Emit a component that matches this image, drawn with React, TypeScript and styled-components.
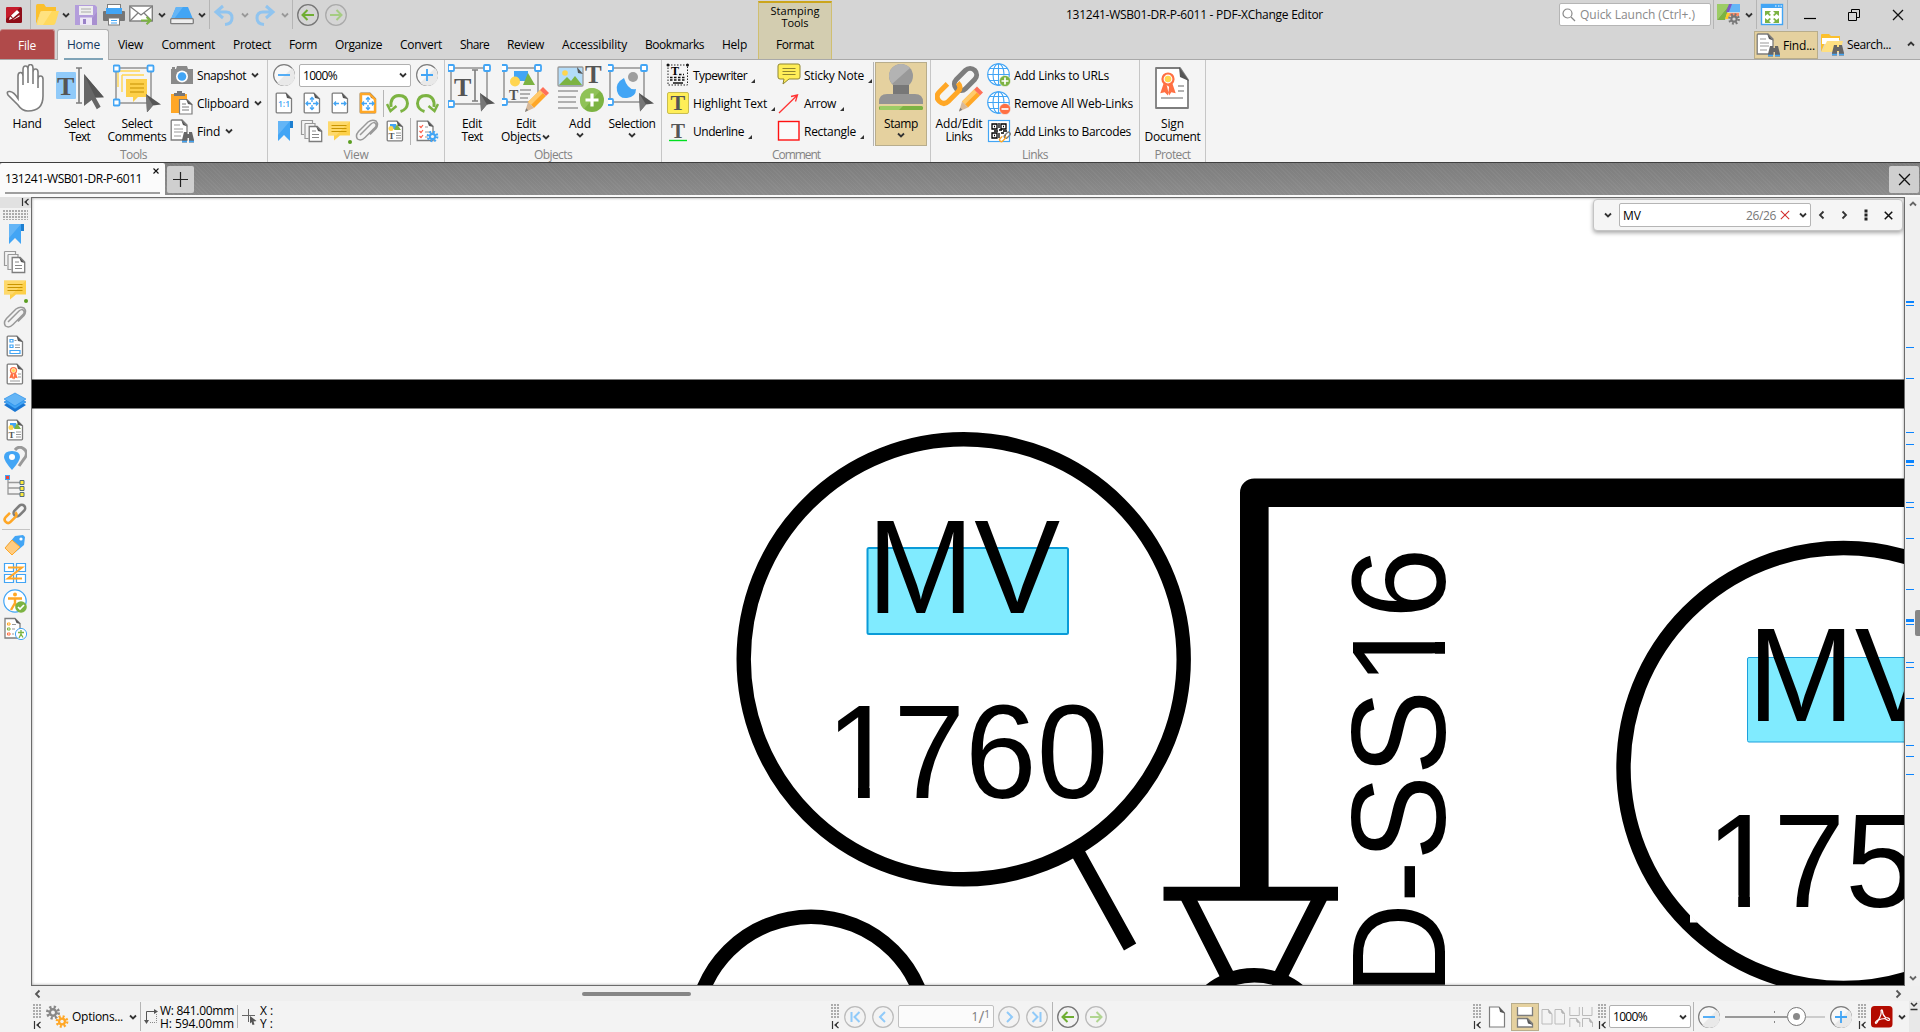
import React, { useLayoutEffect, useRef, useState } from "react";
import styled, { createGlobalStyle, css } from "styled-components";

const ink = "#555";
const line = "#7d7d7d";
const blue = "#42a5f5";
const orange = "#ffa726";
const green = "#7cb342";

const GlobalStyle = createGlobalStyle`
  * { box-sizing: border-box; }
  html, body { margin: 0; padding: 0; }
  body {
    font-family: "Open Sans", "Noto Sans", sans-serif;
    font-size: 12px;
    color: #000;
    overflow: hidden;
  }
  svg { display: block; flex: none; }
`;

/* ---------- text ---------- */

const LabelText = styled.span<{ $color?: string; $size?: number }>`
  display: block;
  white-space: pre;
  line-height: 13px;
  font-size: ${(p) => p.$size ?? 12}px;
  color: ${(p) => p.$color ?? "inherit"};
`;

/* A label whose tracking is adjusted so that it fills the given width. */
function Label({ w, color, size, children }: { w: number; color?: string; size?: number; children: string }) {
  const ref = useRef<HTMLSpanElement>(null);
  const [tracking, setTracking] = useState(0);
  useLayoutEffect(() => {
    const range = document.createRange();
    range.selectNodeContents(ref.current!);
    setTracking((w - range.getBoundingClientRect().width) / children.length);
  }, []);
  return (
    <LabelText ref={ref} $color={color} $size={size} style={{ letterSpacing: tracking, width: w }}>
      {children}
    </LabelText>
  );
}

/* ---------- icons ---------- */

type IconProps = { s?: number; children?: React.ReactNode };
const Svg = ({ s = 24, children }: IconProps) => (
  <svg width={s} height={s} viewBox={`0 0 ${s} ${s}`} fill="none">{children}</svg>
);

const Chevron = ({ dir = "down", color = "#333" }: { dir?: "down" | "up" | "left" | "right"; color?: string }) => {
  const d = { down: "M2 3.500l3 3 3-3", up: "M2 6.500l3-3 3 3", left: "M6.5 1.5L3 5l3.500 3.500", right: "M3.500 1.500L7 5l-3.500 3.500" }[dir];
  return <svg width="10" height="10" viewBox="0 0 10 10" fill="none"><path d={d} stroke={color} strokeWidth="1.800" /></svg>;
};

const Cross = ({ s = 12, color = "#111", w = 1.3 }: { s?: number; color?: string; w?: number }) => (
  <svg width={s} height={s} viewBox="0 0 12 12" fill="none"><path d="M1 1l10 10M11 1L1 11" stroke={color} strokeWidth={w} /></svg>
);

const DocShape = () => (
  <>
    <path d="M4.200 3q0-.8.8-.8h9l5.500 5.500V21q0 .8-.8.800H5q-.8 0-.8-.8z" fill="#fff" stroke={line} strokeWidth="1.300" />
    <path d="M13.500 1.800l6 6.200-4.500-1z" fill={ink} />
  </>
);
const LogoIcon = () => (
  <svg width="16" height="16" viewBox="0 0 16 16">
    <rect width="16" height="16" rx="1.500" fill="#8f0d18" /><path d="M0 1.500Q0 0 1.500 0H15L0 12z" fill="#c51c2c" />
    <path d="M5 8.500l6-5.500 2.500 2.500-6.500 5.500zM4 9.500l2.500 2-3.500 1.500zM8 12l5.500-4v1.500L7 13z" fill="#fff" />
  </svg>
);
const FolderOpen = () => (
  <Svg><path d="M1 3q0-2 1.500-2H9l2 3h10v4H6L1 21z" fill="#fbc02d" /><path d="M7 8h17l-3.500 12Q20 22 18 22H1.500L5 9.500Q5.500 8 7 8z" fill="#ffd95e" /><path d="M8 8h9L8 22H2L5.500 9z" fill="#ffe58f" opacity=".7" /></Svg>
);
const SaveIcon = () => (
  <Svg><path d="M1 2h20l2 2v18H1z" fill="#b39ddb" /><path d="M13 22L23 9v13z" fill="#a88fd0" /><rect x="5" y="3" width="14" height="9" fill="#eee" /><path d="M7 6h10M7 9h10" stroke="#aaa" /><rect x="6" y="14.500" width="12" height="7.500" fill="#ede7f6" /><rect x="9" y="16" width="3" height="5" fill="#9a82c8" /></Svg>
);
const PrintIcon = () => (
  <Svg><rect x="5.500" y="1.500" width="13" height="6" fill="#fff" stroke={line} /><rect x="1" y="8" width="22" height="10" rx="1" fill="#757575" /><rect x="4" y="5" width="16" height="6" fill={blue} /><rect x="6.500" y="15" width="11" height="7" fill="#fff" stroke={line} /><path d="M9 17.500h6M9 20h6" stroke={blue} /></Svg>
);
const MailIcon = () => (
  <Svg><rect x=".8" y="3" width="22.500" height="15" fill="#fff" stroke={line} strokeWidth="1.400" /><path d="M1 3.500l11 8.500 11-8.500M1 18l8-8M23 18l-8-8" stroke={line} strokeWidth="1.200" /><path d="M12 17.500h9M17.500 14l4 3.500-4 3.800" stroke={green} strokeWidth="2" /></Svg>
);
const ScanIcon = () => (
  <Svg><path d="M6 4h12l5 12H1z" fill={blue} /><path d="M6 4h7L4 16H1z" fill="#64b5f6" /><rect x=".7" y="15.700" width="22.600" height="5" rx="1" fill="#eee" stroke={line} strokeWidth="1.300" /></Svg>
);
const Undo = ({ flip }: { flip?: boolean }) => (
  <Svg><g transform={flip ? "translate(24 0) scale(-1 1)" : undefined} stroke="#90c4ef" strokeWidth="3"><path d="M11 3L4 9l7 6M5 9h9q6 0 6 6 0 6-7 6.500" /></g></Svg>
);
const RoundArrow = ({ dir, ring, color }: { dir: "left" | "right"; ring: string; color: string }) => (
  <Svg><circle cx="12" cy="12" r="10.300" stroke={ring} strokeWidth="1.300" /><g transform={dir === "right" ? "translate(24 0) scale(-1 1)" : undefined}><path d="M18 12H7.500M11.500 7L6.500 12l5 5" stroke={color} strokeWidth="2" /></g></Svg>
);
const RoundSign = ({ plus }: { plus?: boolean }) => (
  <Svg><circle cx="12" cy="12" r="10.400" fill="#f8f8f8" stroke={line} strokeWidth="1.200" /><path d="M5 20A10 10 0 0020 5z" fill="#e9e9e9" /><path d={plus ? "M6 12h12M12 6v12" : "M6 12h12"} stroke={blue} strokeWidth="1.800" /></Svg>
);
const RoundNav = ({ d }: { d: string }) => (
  <Svg><circle cx="12" cy="12" r="10.300" stroke="#bbb" strokeWidth="1.200" /><path d={d} stroke="#90caf9" strokeWidth="2" /></Svg>
);
const Handles = ({ w = 36, h = 36 }: { w?: number; h?: number }) => (
  <>
    <rect x="6" y="6" width={w} height={h} stroke="#999" strokeWidth="1.600" />
    {[[6, 6], [6 + w, 6], [6, 6 + h]].map(([x, y]) => (
      <rect key={`${x}-${y}`} x={x - 3} y={y - 3} width="6" height="6" rx="1" fill="#fff" stroke={blue} strokeWidth="1.800" />
    ))}
  </>
);
const Pointer = ({ x = 0, y = 0 }: { x?: number; y?: number }) => (
  <g transform={`translate(${x} ${y})`}><path d="M0 0l15 10.500-8 1-6 7z" fill={ink} /><path d="M0 0l7 11.500-6 7z" fill="#777" /></g>
);
const Serif = ({ x, y, s, c = ink }: { x: number; y: number; s: number; c?: string }) => (
  <text x={x} y={y} fontFamily="Liberation Serif, serif" fontWeight="700" fontSize={s} fill={c}>T</text>
);
const Pencil = ({ x = 0, y = 0 }: { x?: number; y?: number }) => (
  <g transform={`translate(${x} ${y})`}><path d="M3 15L15 3l6 6L9 21z" fill={orange} /><path d="M3 15L15 3l3 3L6 18z" fill="#ffca6b" /><path d="M15 3l3-3 6 6-3 3z" fill="#ff7058" /><path d="M3 15l6 6-9 4z" fill="#d7b99a" /><path d="M1.200 21.200l2 2L0 25z" fill={line} /></g>
);

const HandIcon = () => (
  <Svg s={48}><path d="M15 29V12q0-3.500 2.500-3.500T20 12v9V6q0-4 2.500-4T25 6v13V4q0-3.500 2.500-3.500T30 4v16V8q0-3 2.500-3T35 8v16V15q0-3 2.500-3T40 15v17q0 15-15 15-6 0-10-6L5 31q-2-4 2-3.500 4 .5 8 7z" fill="#fff" stroke={line} strokeWidth="1.600" /></Svg>
);
const SelectTextIcon = () => (
  <Svg s={48}><rect x="0" y="8" width="20" height="27" rx="1" fill="#90caf9" /><Serif x={1} y={31} s={26} /><path d="M20 4h6M20 39h6M23 4v35" stroke={line} strokeWidth="1.600" /><g transform="translate(28 10) scale(1.280 1.550)"><path d="M0 0l15.500 15-6.500.2 4 6-3 1.500-4-6-6 4z" fill="#666" /><path d="M0 0l15.500 15-6.500.2z" fill={ink} /></g></Svg>
);
const SelectCommentsIcon = () => (
  <Svg s={48}><rect x="3" y="4" width="35" height="35" stroke="#999" strokeWidth="1.600" /><path d="M5 7h22M5 7v16M9 11h22M9 11v17" stroke="#ffd54f" strokeWidth="1.400" /><path d="M13 15h21v18H25l-5 5v-5h-7z" fill="#fdd04a" /><path d="M17 20h14M17 24h14M17 28h14" stroke="#c58f00" strokeWidth="1.200" />
    {[[3, 4], [37, 4], [3, 38]].map(([x, y]) => <rect key={x * 99 + y} x={x - 2.5} y={y - 2.5} width="6" height="6" rx="1" fill="#fff" stroke={blue} strokeWidth="1.800" />)}<Pointer x={33} y={30} /></Svg>
);
const EditTextIcon = () => (
  <Svg s={48}><g transform="translate(-3 -2)"><Handles w={36} h={36} /></g><Serif x={6} y={32} s={26} /><path d="M24 6h6M24 37h6M27 6v31" stroke={line} strokeWidth="1.600" /><Pointer x={32} y={29} /></Svg>
);
const EditObjectsIcon = () => (
  <Svg s={48}><g transform="translate(-4 -2)"><Handles w={34} h={34} /></g><path d="M12 7h14v10H12z" fill={blue} /><path d="M21 21L26 9l7 12z" fill={green} /><circle cx="13" cy="17.500" r="5" fill="#ffd54f" /><Serif x={7} y={36} s={14} /><path d="M18 26h11M18 30h10M18 34h8" stroke="#999" strokeWidth="1.400" /><Pencil x={23} y={23} /></Svg>
);
const Picture = ({ x, y }: { x: number; y: number }) => (
  <g transform={`translate(${x} ${y})`}><rect width="25" height="19" rx="1" fill="#b3dcf9" stroke="#999" strokeWidth="1.300" /><circle cx="7" cy="6" r="2.800" fill="#ffd54f" /><path d="M1 18l8-8 4 4 4-5 7 9z" fill={green} /><path d="M19 0l6 7-5-1z" fill={ink} /></g>
);
const AddIcon = () => (
  <Svg s={48}><Picture x={2} y={3} /><Serif x={29} y={19} s={25} /><path d="M2 27h20M2 33h18M2 38h18M2 44h20" stroke="#999" strokeWidth="1.500" /><circle cx="36" cy="36" r="12" fill={green} /><path d="M28 45A12 12 0 0144 27z" fill="#9ccc65" opacity=".6" /><path d="M29.500 36h13M36 29.500v13" stroke="#fff" strokeWidth="3.200" /></Svg>
);
const SelectionIcon = () => (
  <Svg s={48}><g transform="translate(-4 -2)"><Handles w={34} h={34} /></g><path d="M16 14q-9 5-7 13t10 7q9-1 9-9-8 2-12-11z" fill={blue} /><circle cx="25" cy="13" r="5" fill="#9e9e9e" /><Pointer x={31} y={29} /></Svg>
);
const StampIcon = () => (
  <Svg s={48}><circle cx="24" cy="12" r="12" fill="#999" /><path d="M15 20A12 12 0 0133 4z" fill="#b3b3b3" /><path d="M16 21h16v9H16z" fill="#777" /><path d="M2 40v-2q0-8 8-8h28q8 0 8 8v2z" fill="#949494" /><rect x="2" y="42" width="44" height="4" rx="1.500" fill={green} /><path d="M3 42h23l-4 4H3z" fill="#9ccc65" /></Svg>
);
const ChainShape = () => (
  <g strokeWidth="5">
    <g transform="translate(30.500 15.500) rotate(-45)"><rect x="-13" y="-6.500" width="26" height="13" rx="6.500" stroke={line} /></g>
    <g transform="translate(13.500 28) rotate(-45)"><path d="M5 -6.500H-6.500Q-13 -6.500 -13 0T-6.500 6.500H6.500Q13 6.500 13 0" stroke={orange} /></g>
  </g>
);
const AddLinkIcon = () => <Svg s={48}><ChainShape /><Pencil x={24} y={22.5} /></Svg>;
const Rosette = ({ k = 1, x = 0, y = 0 }: { k?: number; x?: number; y?: number }) => (
  <g transform={`translate(${x} ${y}) scale(${k})`}><path d="M-4 4l-3 9 4-1 3 3 1-8M4 4l3 9-4-1-2 3-2-9" fill="#ff7043" /><circle r="6" fill="#ff7043" /><circle r="3.500" fill="#ffd54f" stroke="#fff" /></g>
);
const SignIcon = () => (
  <Svg s={48}><g transform="translate(-1 0)"><path d="M8 4h24l8 12v28H8z" fill="#fff" stroke={line} strokeWidth="1.800" strokeLinejoin="round" /><path d="M31 3l10 14-9-4z" fill={ink} /><Rosette x={20} y={15} k={1.1} /><path d="M30 22h6M30 27h6M13 34h22" stroke="#999" strokeWidth="1.500" /></g></Svg>
);

const SnapshotIcon = () => (
  <Svg><path d="M1 6h22v15H1zM7 3h10l1 3H6zM2 4h3v2H2z" fill="#8a8a8a" /><circle cx="12" cy="13.500" r="6" fill="#fff" /><circle cx="12" cy="13.500" r="4.300" fill={blue} /></Svg>
);
const ClipboardIcon = () => (
  <Svg><path d="M1 3h16v19H1z" fill={orange} /><path d="M4 5V2h3V0h5v2h3v3z" fill="#777" /><path d="M9.500 8.500h7.500l5 5V23H9.500z" fill="#fff" stroke={line} strokeWidth="1.200" /><path d="M16 8l6.500 6-4.500-1z" fill={ink} /><path d="M12 13h4M12 16h7M12 19h7" stroke={line} /></Svg>
);
const Binoculars = ({ x = 12, y = 12 }: { x?: number; y?: number }) => (
  <g transform={`translate(${x} ${y})`}><path d="M2 1h3v2h2V1h3l2 8v2.500H7V7H5v4.500H0V9z" fill="#666" /><path d="M0 10.500h5M7 10.500h5" stroke={blue} strokeWidth="1.500" /></g>
);
const FindDoc = () => (
  <Svg><path d="M1.200 2q0-1 1-1H12l5 5v15H1.200z" fill="#fff" stroke={line} strokeWidth="1.300" /><path d="M11 .5l6.500 7L13 6z" fill={ink} /><path d="M4 6h6M4 10h9M4 13h9M4 17h7" stroke="#999" /><Binoculars /></Svg>
);
const FolderSearch = () => (
  <Svg><path d="M1 3q0-1 1-1h7l2 2h9v4H6L1 20z" fill="#fbc02d" /><path d="M2 6h17v6H2z" fill="#fff" /><path d="M7 9h16l-3 11H1.500z" fill="#ffe082" /><Binoculars x={12} y={12} /></Svg>
);
const Fit = ({ kind }: { kind: "one" | "all" | "width" | "visible" }) => (
  <Svg>
    <DocShape />
    {kind === "one" && <text x="6" y="16" fontSize="8.500" fontWeight="600" fontFamily="Open Sans, sans-serif" fill={blue}>1:1</text>}
    {kind === "visible" && <path d="M5 3h8.500l5.500 5.500V21H5z" stroke={orange} strokeWidth="2.400" />}
    {kind !== "one" && <path d="M11 12.500H6M8 10.500l-2 2 2 2M13 12.500h5M16 10.500l2 2-2 2" stroke={blue} strokeWidth="1.300" />}
    {(kind === "all" || kind === "visible") && <path d="M12 11V6.500M10 8.500l2-2 2 2M12 14v4.500M10 16.500l2 2 2-2" stroke={blue} strokeWidth="1.300" />}
  </Svg>
);
const Rotate = ({ flip }: { flip?: boolean }) => (
  <Svg><g transform={flip ? "translate(24 0) scale(-1 1)" : undefined}><path d="M5 16q-1-11 8-11.500 8 0 8.500 8-.500 6-7 8" stroke={green} strokeWidth="3" /><path d="M1 13l3.500 7 6-5" stroke={green} strokeWidth="2.500" /></g></Svg>
);
const BookmarkIcon = () => (
  <Svg><path d="M6 2h15v7h-3v13l-6-6-6 6z" fill={blue} /><path d="M18 2h3v7h-3z" fill="#1e7fd0" /><path d="M6 2h12L6 16z" fill="#64b5f6" /></Svg>
);
const PagesIcon = () => (
  <Svg><path d="M1.500 1.500h11V4M1.500 1.500v14H4M5 4.500h10V7M5 4.500v15h3.500" stroke="#999" strokeWidth="1.200" /><path d="M9.200 7.500h8l4.500 4.500v10.500H9.200z" fill="#fff" stroke={line} strokeWidth="1.300" /><path d="M16 7l6 6-4-1z" fill={ink} /><path d="M12 12h4M12 15.500h7M12 18.500h7" stroke="#888" /></Svg>
);
const CommentsIcon = () => (
  <Svg><path d="M1 2.500h22v14H13l-6 5v-5H1z" fill="#fdd04a" /><path d="M1 2.500h22l-14 14H1z" fill="#ffe082" opacity=".6" /><path d="M4.500 6.500h15M4.500 9.500h15M4.500 12.500h15" stroke="#c99500" /></Svg>
);
const PaperclipIcon = () => (
  <Svg><path d="M5 16L16 5q3-2.500 4.500-.5t-.5 4L10 18.500q-4 4-7.500 1.500-2.500-3.500 1-7.500L13 3q4-3 8-1 3 3.500 0 7.500l-6 6" stroke="#999" strokeWidth="1.500" /></Svg>
);
const ContentIcon = () => (
  <Svg><DocShape /><path d="M7 5h6v5H7z" fill={blue} /><path d="M11 11l3-6 4 6z" fill={green} /><circle cx="8" cy="9.500" r="2.500" fill="#ffd54f" /><Serif x={5.5} y={20} s={9} /><path d="M13 14h5M13 16.500h5M13 19h5" stroke="#999" /></Svg>
);
const Gear = ({ x, y, r, c, hole = "#f3f3f3" }: { x: number; y: number; r: number; c: string; hole?: string }) => (
  <g><circle cx={x} cy={y} r={r} stroke={c} strokeWidth={r * 0.55} strokeDasharray={`${(r * Math.PI) / 8} ${(r * Math.PI) / 8}`} /><circle cx={x} cy={y} r={r * 0.8} fill={c} /><circle cx={x} cy={y} r={r * 0.35} fill={hole} /></g>
);
const ChecklistGear = () => (
  <Svg><path d="M2.200 2.200H13l5 5V21.500H2.200z" fill="#fff" stroke={line} strokeWidth="1.300" /><path d="M12 1.500l6.500 6.500-4.500-1z" fill={ink} /><path d="M4.500 7l1.500 1.500L8 6M4.500 12l1.500 1.500L8 11M4.500 17l1.500 1.500L8 16" stroke="#ff5a45" strokeWidth="1.200" /><path d="M10 8h3M10 13h5M10 18h3" stroke="#999" /><Gear x={17.5} y={17.5} r={4.6} c={blue} /></Svg>
);
const TypewriterIcon = () => (
  <Svg><rect x="2" y="2" width="19.500" height="20" stroke="#222" strokeDasharray="1.500 1.500" /><circle cx="2" cy="2" r="1.500" fill="#111" /><circle cx="21.500" cy="2" r="1.500" fill="#111" /><Serif x={5} y={12} s={12} c="#000" /><path d="M13 11.500h5M4 14.500h16M4 17h16" stroke="#111" strokeWidth="1.500" strokeDasharray="2.500 1.500" /><path d="M7 20h10" stroke="#111" strokeWidth="1.500" /></Svg>
);
const HighlightIcon = () => <Svg><rect x="1.500" y="1.500" width="21" height="21" rx="1.500" fill="#ffee58" stroke="#c9bd50" /><Serif x={4.5} y={19} s={22} /></Svg>;
const UnderlineIcon = () => <Svg><Serif x={5} y={18.5} s={21} /><path d="M3 21.500h18" stroke="#00e020" strokeWidth="1.400" /></Svg>;
const StickyIcon = () => <Svg><path d="M3 1h18q2 0 2 2v11q0 2-2 2H12l-6 5 1-5H3q-2 0-2-2V3q0-2 2-2z" fill="#ffee58" stroke="#8f8530" /><path d="M5.500 5.500h13M5.500 8.500h13M5.500 11.500h13" stroke="#8f8530" /></Svg>;
const ArrowIcon = () => <Svg><path d="M2 22L20 4.500M14 5.500l6.500-1.500-2 6.500" stroke="#f33" strokeWidth="1.300" /></Svg>;
const RectIcon = () => <Svg><rect x="1.500" y="2.500" width="20.500" height="18.500" fill="#fafafa" stroke="#f11" strokeWidth="1.400" /></Svg>;
const Globe = ({ remove }: { remove?: boolean }) => (
  <Svg><g stroke={blue} strokeWidth="1.100"><circle cx="11.500" cy="11.500" r="10.800" fill="#fff" /><ellipse cx="11.500" cy="11.500" rx="5.500" ry="10.800" /><path d="M.7 11.500h21.600M11.500 .7v21.600M3 5.500h17M3 17.500h17" /></g><circle cx="18" cy="18" r="5.600" fill={remove ? "#ff7043" : green} stroke="#f3f3f3" strokeWidth=".6" /><path d={remove ? "M14.500 18h7" : "M14.500 18h7M18 14.500v7"} stroke="#fff" strokeWidth="1.700" /></Svg>
);
const BarcodeIcon = () => (
  <Svg><rect x="1.500" y="1.500" width="21" height="21" fill="#fff" stroke={blue} strokeWidth="1.200" /><g stroke="#000" strokeWidth="1.300"><path d="M5 5h5v5H5zM14 5h5v5h-5zM5 14h5v5H5z" /><path d="M12 4v5M12 11h3M16 12h4M7 12h4M12 14v5M14 14h3M17 17h2" /></g><path d="M7 7.500h1M16 7.500h1M7 16.500h1" stroke="#000" strokeWidth="1.500" /><g transform="translate(12 12) scale(.27)"><ChainShape /></g></Svg>
);
const ThemeIcon = () => (
  <Svg><path d="M1 1h13L1 17z" fill="#9ccc65" /><path d="M1 17L14 1v0L9 17z" fill={green} /><path d="M15 1h9v8H11z" fill="#64b5f6" /><path d="M13 1h3l-3 8h-3z" fill="#7e57c2" /><path d="M12 10h11v3H11z" fill="#ff8a65" /><path d="M11 10h3l-2 6h-3z" fill="#ffca28" /><Gear x={18} y={16} r={4.6} c="#777" hole="#d5d5d5" /></Svg>
);
const FullscreenIcon = () => (
  <Svg><rect x="1.500" y="1.500" width="21" height="20" fill="#fff" stroke={blue} strokeWidth="1.400" /><path d="M1 1h22v4H1z" fill={blue} /><path d="M15 3h1.500M18 3h1.500M20.500 3H22" stroke="#fff" /><g fill={green}><path d="M5 8h6l-2 2 2 2-1.500 1L7.500 11 5 13zM19 8h-6l2 2-2 2 1.500 1 2-2 2.500 2zM5 20h6l-2-2 2-2-1.500-1-2 2L5 15zM19 20h-6l2-2-2-2 1.500-1 2 2 2.500-2z" /></g></Svg>
);
const FieldsIcon = () => <Svg><DocShape /><path d="M7 5.500h3v2.500H7zM7 11h3v2.500H7zM7 16.500h10v3H7z" stroke={blue} strokeWidth="1.200" /><path d="M11.500 6.500h2M12 11h5M12 13.500h5" stroke="#999" /></Svg>;
const SignaturesIcon = () => <Svg><DocShape /><Rosette x={10.5} y={8.5} k={0.6} /><path d="M15 12h3M15 15h3M7 19h10" stroke="#999" /></Svg>;
const LayersIcon = () => <Svg><path d="M1 15l11-6 11 6-11 7z" fill="#1976d2" /><path d="M1 12l11-6 11 6-11 7z" fill={blue} stroke="#1976d2" strokeWidth=".6" /><path d="M1 9l11-6 11 6-11 7z" fill="#64b5f6" stroke="#1e88e5" strokeWidth=".6" /></Svg>;
const PinsIcon = () => <Svg><path d="M12 4q4-5 9-1t0 10l-5 7" stroke="#999" strokeWidth="3" /><path d="M9 24q-8-9-8-13 0-6 8-6t8 6q0 4-8 13z" fill={blue} /><circle cx="9" cy="11" r="3" fill="#fff" /></Svg>;
const TreeIcon = () => <Svg><path d="M5 4v16h12M5 8.500h12M5 14h12" stroke="#999" strokeWidth="1.300" /><rect x="2.500" y="1.500" width="4" height="4" fill="#f44336" stroke={blue} /><g fill="#ffeb3b" stroke="#546e7a"><path d="M17 6.500h4v4h-4zM17 12.500h4v4h-4zM17 18.500h4v4h-4z" /></g></Svg>;
const LinksIcon = () => <Svg><g transform="translate(.500 .500) scale(.520)"><ChainShape /></g></Svg>;
const TagIcon = () => <Svg><path d="M12 3l8-1 2 2-1 8L9 22 2 15z" fill={blue} /><path d="M9 7l8 7-8 8-7-7z" fill="#ffcc80" stroke={orange} /><circle cx="18" cy="6" r="1.600" fill="#fff" /></Svg>;
const OrderIcon = () => <Svg><path d="M1.500 2.500h9v8h-9zM13.500 2.500h9v8h-9zM1.500 13.500h9v8h-9zM13.500 13.500h9v8h-9z" fill="#fff" stroke={blue} strokeWidth="1.200" /><path d="M5 6.500h14L5 17.500h14" stroke={orange} strokeWidth="2" /></Svg>;
const AccessIcon = () => <Svg><circle cx="12" cy="12" r="11.200" fill="#fff" stroke={blue} strokeWidth="1.200" /><circle cx="12" cy="5.500" r="2" fill={orange} /><path d="M5 9.500h14M12 9v6M12 14l-4 7M12 14l3 5" stroke={orange} strokeWidth="2.400" /><circle cx="18" cy="18" r="5.800" fill={green} /><path d="M15 18l2 2 4-4" stroke="#fff" strokeWidth="1.700" /></Svg>;
const AccessListIcon = () => <Svg><path d="M2 1.500h10l5 5V21H2z" fill="#fff" stroke={line} strokeWidth="1.300" /><path d="M11.500 1l6 6-4-1z" fill={ink} /><path d="M4.500 6H7v2H4.500z" stroke={orange} /><path d="M4.500 11H7v2H4.500z" stroke={green} /><path d="M4.500 16H7v2H4.500z" stroke="#ff7043" /><path d="M9 7.500h4M9 12h3M9 17h2" stroke="#999" /><circle cx="18" cy="17" r="5.600" fill="#fff" stroke={blue} /><path d="M15 15.500h6M18 13v4l-2 4M18 17l2 3.500" stroke={green} strokeWidth="1.300" /></Svg>;
const GearsIcon = () => <Svg><Gear x={8} y={7.5} r={5.5} c="#888" /><Gear x={17} y={16.5} r={5} c={orange} /></Svg>;
const PageLayout = ({ kind }: { kind: "single" | "scroll" | "facing" | "grid" }) => (
  <Svg>
    {kind === "single" && <><path d="M4.500 2h9.500l5.500 6v14h-15z" fill="#fff" stroke={line} strokeWidth="1.200" /><path d="M14 2l6 6.500-5-1.500z" fill={ink} /></>}
    {kind === "scroll" && <><path d="M4.500 2v8.500h15V2M4.500 22v-8.500h10l5 5V22z" fill="#fff" stroke={line} strokeWidth="1.300" /><path d="M13.500 13l6.500 7-5-1.500z" fill={ink} /></>}
    {kind === "facing" && <g stroke="#bbb"><path d="M1 4.500h6l4 5v9.500H1zM14 4.500h6l3.500 5v9.500H14z" /><path d="M7 4l4 5-3-1zM20 4l4 5-3-1z" fill="#aaa" /></g>}
    {kind === "grid" && <g stroke="#bbb"><path d="M.8 2v8.500h9.500V2M13.500 2v8.500H23V2M.8 22v-8.500h6l4 4V22M13.500 22v-8.500h6l4 4V22" /><path d="M7 13l4 5-3-1zM20 13l4 5-3-1z" fill="#aaa" /></g>}
  </Svg>
);
const PdfIcon = () => <Svg><rect x="1" y="1" width="21.500" height="21.500" rx="3.500" fill="#b30b00" /><path d="M6 18.500q-2-1 2.500-4 3.500-5 2.500-9 1-1.500 1.500.5 0 4 3 6.500 4.500.5 4 2.500-1 1.500-4.500-1.500-4 .2-6.500 1.500-1.500 3-2.500 3.500z" stroke="#fff" strokeWidth="1.200" /></Svg>;
const SearchIcon = () => <svg width="14" height="14" viewBox="0 0 14 14" fill="none"><circle cx="5.500" cy="5.500" r="4.500" stroke="#888" strokeWidth="1.200" /><path d="M9 9l4 4" stroke="#888" strokeWidth="1.200" /></svg>;
const SizeIcon = () => <svg width="16" height="18" viewBox="0 0 16 18" fill="none"><path d="M12 3.500H3.500V13" stroke={ink} /><path d="M11 1l4 2.500L11 6zM1 12h5l-2.500 4z" fill={ink} /><path d="M7 14.500h6.500V6" stroke="#888" strokeDasharray="1 1" /></svg>;
const CursorIcon = () => <svg width="16" height="18" viewBox="0 0 16 18" fill="none"><path d="M0 7.500h13M6.500 1v13" stroke="#666" /><path d="M8 8l6.500 5-3 .5 1 3-2 .5-1-3-1.500 1.500z" fill={ink} /></svg>;

/* ---------- shell ---------- */

const Window = styled.div`
  width: 1920px;
  height: 1032px;
  display: flex;
  flex-direction: column;
  background: #f3f3f3;
  overflow: hidden;
`;
const Bar = styled.div`
  display: flex;
  align-items: center;
  flex: none;
`;
const Header = styled.header`
  display: flex;
  height: 60px;
  flex: none;
  background: #d5d5d5;
  border-bottom: 1px solid #a9a9a9;
`;
const HeaderLeft = styled.div`width: 758px;`;
const HeaderRight = styled.div`margin-left: auto; width: 370px;`;
const QuickBar = styled(Bar)`height: 29px;`;
const Item = styled.div<{ $ml?: number; $w?: number }>`
  display: flex;
  flex: none;
  align-items: center;
  margin-left: ${(p) => p.$ml ?? 0}px;
  ${(p) => p.$w && css`width: ${p.$w}px; justify-content: center;`}
`;
const Divider = styled.i<{ $h?: number; $ml?: number }>`
  flex: none;
  width: 1px;
  height: ${(p) => p.$h ?? 29}px;
  margin-left: ${(p) => p.$ml ?? 0}px;
  background: #b5b5b5;
`;
const TabRow = styled.nav`display: flex; height: 30px;`;
const FileTab = styled.div`
  width: 55px;
  margin-right: 2px;
  padding: 9px 0 0 18px;
  background: #b04a4a;
  border: 1px solid #c98b8b;
  border-width: 1px 1px 0 0;
  border-radius: 3px 3px 0 0;
  color: #fff;
`;
const HomeTab = styled.div`
  width: 52px;
  height: 31px;
  padding: 8px 0 0 9px;
  background: #f5f5f5;
  border: 1px solid #b0b0b0;
  border-bottom: 0;
  border-radius: 3px 3px 0 0;
  color: #16395f;
  &::after {
    content: "";
    display: block;
    width: 39px;
    height: 2px;
    margin: 7px 0 0 -3px;
    background: #7fa3b7;
  }
`;
const Tab = styled.div<{ $w: number }>`
  width: ${(p) => p.$w}px;
  padding-top: 9px;
  flex: none;
`;
const Contextual = styled.div`
  width: 74px;
  height: 58px;
  margin-top: 1px;
  padding-top: 2px;
  background: #d3cdb0;
  border: 1px solid #d0bf70;
  border-width: 2px 1px 0;
  border-top-color: #cba51c;
  display: flex;
  flex-direction: column;
  align-items: center;
  & > :last-child { margin-top: 10px; }
  & > * { line-height: 12px; }
`;
const AppTitle = styled.div`padding: 8px 0 0 234px;`;
const QuickLaunch = styled.div`
  display: flex;
  align-items: center;
  gap: 4px;
  width: 152px;
  height: 23px;
  margin-left: 9px;
  padding-left: 2px;
  background: #fff;
  border: 1px solid #b5b5b5;
  border-radius: 2px;
`;
const FindToggle = styled.div`
  display: flex;
  align-items: center;
  gap: 3px;
  width: 64px;
  height: 28px;
  margin: 2px 0 0 204px;
  padding-left: 1px;
  background: #e5d19f;
  border: 1px solid #b8ad8c;
`;

/* ---------- ribbon ---------- */

const Ribbon = styled.section`
  display: flex;
  height: 103px;
  flex: none;
  background: #f4f4f4;
  border-bottom: 1px solid #3f3f3f;
`;
const Group = styled.div<{ $w: number }>`
  width: ${(p) => p.$w}px;
  flex: none;
  display: flex;
  flex-direction: column;
  border-right: 1px solid #c6c6c6;
`;
const GroupBody = styled.div`display: flex; height: 88px; padding-top: 2px;`;
const GroupName = styled.div`display: flex; justify-content: center;`;
const BigButton = styled.div<{ $w: number; $active?: boolean; $ml?: number }>`
  display: flex;
  flex-direction: column;
  align-items: center;
  flex: none;
  width: ${(p) => p.$w}px;
  height: 84px;
  padding-top: 1px;
  margin-left: ${(p) => p.$ml ?? 0}px;
  border: 1px solid ${(p) => (p.$active ? "#b8ad8c" : "transparent")};
  background: ${(p) => (p.$active ? "#e5d19f" : "transparent")};
  & > svg:first-child { margin-bottom: 5px; }
`;
const Column = styled.div<{ $ml?: number }>`
  display: flex;
  flex-direction: column;
  margin-top: -1px;
  margin-left: ${(p) => p.$ml ?? 0}px;
`;
const ToolRow = styled.div`display: flex; align-items: center; height: 28px;`;
const Corner = styled.i`
  align-self: flex-end;
  margin: 0 0 6px 4px;
  border: 2px solid #333;
  border-top-color: transparent;
  border-left-color: transparent;
`;
const Combo = styled.div<{ $w: number }>`
  display: flex;
  align-items: center;
  justify-content: space-between;
  width: ${(p) => p.$w}px;
  height: 23px;
  padding: 0 2px 0 3px;
  background: #fff;
  border: 1px solid #b0b0b0;
  border-radius: 2px;
`;
const GreenDot = styled.i`
  position: absolute;
  right: -1px;
  bottom: -1px;
  width: 4px;
  height: 4px;
  border-radius: 50%;
  background: #5a9e20;
`;
const Badge = styled.span`position: relative; display: block;`;

/* ---------- document tabs ---------- */

const DocBar = styled.div`
  display: flex;
  height: 32px;
  flex: none;
  background:
    repeating-linear-gradient(45deg, rgba(255, 255, 255, 0.04) 0 1px, transparent 1px 3px),
    linear-gradient(#7d7d7d, #8b8b8b);
`;
const DocTab = styled.div`
  width: 165px;
  padding: 0 5px;
  background: #fbfbfb;
  border-radius: 2px 2px 0 0;
  &::after {
    content: "";
    display: block;
    height: 2px;
    margin-top: 6px;
    background: #9f9f9f;
  }
`;
const DocTabTop = styled.div`
  display: flex;
  justify-content: space-between;
  height: 23px;
  padding: 9px 0 0 0;
  & > svg { margin-top: -4px; margin-right: 1px; }
`;
const BarButton = styled.div<{ $w: number }>`
  display: grid;
  place-items: center;
  width: ${(p) => p.$w}px;
  height: 27px;
  margin-top: 1px;
  background: #cfcfcf;
  border-radius: 2px;
`;

/* ---------- workspace ---------- */

const Edge = styled.div`height: 2px; flex: none; background: #fafafa;`;
const Workspace = styled.div`display: flex; flex: 1; min-height: 0;`;
const Sidebar = styled.aside`
  width: 31px;
  flex: none;
  display: flex;
  flex-direction: column;
  align-items: center;
`;
const PinBand = styled.div`
  width: 31px;
  height: 11px;
  margin-bottom: 2px;
  padding: 1px 2px 0 0;
  display: flex;
  justify-content: flex-end;
  background: #e1e1e1;
`;
const Grip = styled.i<{ $w: number; $h: number }>`
  display: block;
  width: ${(p) => p.$w}px;
  height: ${(p) => p.$h}px;
  background: radial-gradient(circle at 1px 1px, #aaa 0.7px, transparent 1px) 0 0 / 3px 3px;
`;
const SideIcon = styled.div`height: 28px; display: flex; align-items: center; margin-right: 2px;`;
const SideRule = styled.i`width: 28px; height: 1px; margin: 1px 0 1px; background: #c4c4c4; flex: none;`;
const Main = styled.main`flex: 1; display: flex; flex-direction: column; min-width: 0;`;
const ViewRow = styled.div`display: flex; height: 789px; flex: none;`;
const Page = styled.div`
  position: relative;
  width: 1874px;
  background: #fff;
  border: 1px solid #6b6b6b;
  overflow: hidden;
  &::after {
    content: "";
    position: absolute;
    inset: 0;
    box-shadow: inset 0 0 3px rgba(0, 0, 0, 0.4);
  }
`;
const FindBar = styled.div`
  position: absolute;
  z-index: 2;
  right: 1px;
  top: 1px;
  display: flex;
  align-items: center;
  width: 310px;
  height: 32px;
  background: #f5f5f5;
  border: 1px solid #c4c4c4;
  border-radius: 4px;
  box-shadow: 0 2px 4px rgba(0, 0, 0, 0.35);
`;
const FindInput = styled.div`
  display: flex;
  align-items: center;
  width: 192px;
  height: 24px;
  margin-left: 6px;
  padding-left: 3px;
  background: #fff;
  border: 1px solid #b5b5b5;
  border-radius: 2px;
`;
const VScroll = styled.div`
  position: relative;
  width: 15px;
  background: #f0f0f0;
  display: flex;
  flex-direction: column;
  align-items: center;
  justify-content: space-between;
  padding: 2px 0 3px;
`;
const Tick = styled.i<{ $y: number; $h: number }>`
  position: absolute;
  left: 1px;
  top: ${(p) => p.$y}px;
  width: 8px;
  height: ${(p) => p.$h}px;
  background: #0a84ff;
`;
const VThumb = styled.i`
  position: absolute;
  right: 0;
  top: 413px;
  width: 5px;
  height: 26px;
  border-radius: 2px 0 0 2px;
  background: #868686;
`;
const HScroll = styled.div`
  display: flex;
  align-items: center;
  height: 15px;
  flex: none;
  background: #efefef;
`;
const HThumb = styled.i`width: 109px; height: 4px; border-radius: 2px; background: #868686; margin-left: 539px;`;
const StatusBar = styled.footer`display: flex; flex: 1; align-items: center;`;
const StatusGrip = styled.div<{ $ml?: number }>`
  display: flex;
  flex: none;
  flex-direction: column;
  gap: 2px;
  width: 9px;
  margin-left: ${(p) => p.$ml ?? 0}px;
`;
const PageInput = styled.div`
  display: flex;
  align-items: center;
  justify-content: flex-end;
  width: 96px;
  height: 23px;
  margin-left: 3px;
  padding-right: 3px;
  background: #fbfbfb;
  border: 1px solid #c0c0c0;
  border-radius: 2px;
  font-size: 12px;
  color: #777;
  & i { font-style: normal; font-size: 16px; line-height: 20px; color: #888; }
  & sup { font-size: 10px; line-height: 10px; margin-bottom: 5px; }
`;
const ActiveLayout = styled.div`
  display: grid;
  place-items: center;
  width: 28px;
  height: 28px;
  background: #e5d19f;
  border: 1px solid #b8ad8c;
`;
const Slider = styled.div`
  display: flex;
  align-items: center;
  width: 100px;
  margin-left: 4px;
`;
const Track = styled.i<{ $w: number; $rest?: boolean }>`
  width: ${(p) => p.$w}px;
  height: 2px;
  background: ${(p) => (p.$rest ? "#ccc" : "#999")};
`;
const Notch = styled.i`
  width: 1px;
  height: 12px;
  background: linear-gradient(#888 0 2px, transparent 2px 5px, #999 5px 7px, transparent 7px 10px, #888 10px);
`;
const Knob = styled.i`
  display: grid;
  place-items: center;
  width: 19px;
  height: 19px;
  border: 1px solid #777;
  border-radius: 50%;
  background: #fff;
  &::after { content: ""; width: 7px; height: 7px; border-radius: 50%; background: #8a8a8a; }
`;
const Overflow = styled.div`
  align-self: stretch;
  flex: 1;
  margin-left: 2px;
  padding-top: 1px;
  background: #e8e8e8;
`;

const PinMark = () => <svg width="8" height="8" viewBox="0 0 8 8" fill="none"><path d="M1.500 0v8M7.500 1L4 4l3.500 3M4 4h2" stroke="#333" strokeWidth="1.200" /></svg>;
const GripMark = ({ ml }: { ml?: number }) => <StatusGrip $ml={ml}><Grip $w={9} $h={15} /><PinMark /></StatusGrip>;

/* ---------- drawing ---------- */

const em = 134;
const squeeze = 0.961;
/* The drawing's lettering uses a plain "1": only the stem is kept below the flag. */
const One = ({ id }: { id: string }) => (
  <g>
    <clipPath id={id}><path d={`M0 -110H${em}V-12H45.700V2H33.500V-12H0z`} /></clipPath>
    <text fontSize={em} clipPath={`url(#${id})`}>1</text>
  </g>
);
const Lettering = ({ x, y, rotate = 0, k = squeeze, children }: { x: number; y: number; rotate?: number; k?: number; children: React.ReactNode }) => (
  <g transform={`translate(${x} ${y}) rotate(${rotate}) scale(${k} 1)`} fontFamily="Liberation Sans, Arial, sans-serif" fill="#000">{children}</g>
);
const digit = 0.5562 * em;
const Drawing = () => (
  <svg width="1872" height="787" viewBox="32 198 1872 787" fill="none">
    <path d="M32 394H1904" stroke="#000" strokeWidth="29" />
    <path d="M1254.300 892V492.700H1904" stroke="#000" strokeWidth="28.600" strokeLinejoin="round" />
    <rect x="867.500" y="548" width="200.500" height="86" rx="1.500" fill="#80ebff" stroke="#0a9bd8" strokeWidth="2" />
    <rect x="1747.500" y="657.500" width="190" height="84.500" rx="1.500" fill="#80ebff" stroke="#1ba0dd" />
    <g stroke="#000" strokeWidth="14.400">
      <circle cx="963.700" cy="659.300" r="220" />
      <circle cx="1843.500" cy="768" r="220" />
      <circle cx="811" cy="1033" r="116.300" />
      <circle cx="1254.300" cy="1046" r="70.700" />
      <path d="M1077.500 852l52.600 95M1163.500 893.800H1338" strokeWidth="14" />
      <path d="M1187.500 897l42.500 84M1320.500 897l-42.500 84" />
    </g>
    <path d="M1690 914v8.600h7.500z" fill="#fff" />
    <Lettering x={867.1} y={612.9}><text fontSize={em}>MV</text></Lettering>
    <Lettering x={1747.4} y={720.6}><text fontSize={em}>MV</text></Lettering>
    <Lettering x={821.8} y={798.2}>
      <g transform="translate(4.200 0)"><One id="one-a" /></g>
      <text x={digit} fontSize={em}>760</text>
    </Lettering>
    <Lettering x={1702} y={907}>
      <g transform="translate(4.200 0)"><One id="one-b" /></g>
      <text x={digit} fontSize={em}>758</text>
    </Lettering>
    <Lettering x={1444.5} y={995.3} rotate={-90} k={0.954}>
      <text fontSize={em}>D-SS</text>
      <g transform={`translate(${2.389 * em + 4.4} 0)`}><One id="one-c" /></g>
      <text x={2.389 * em + digit} fontSize={em}>6</text>
    </Lettering>
  </svg>
);

const tabs: [string, number, number][] = [
  ["View", 25, 43.5], ["Comment", 53.5, 71.5], ["Protect", 38, 56], ["Form", 28, 46], ["Organize", 47, 65],
  ["Convert", 42, 60], ["Share", 29, 47], ["Review", 37, 55], ["Accessibility", 65, 83], ["Bookmarks", 59, 77], ["Help", 25, 36],
];
const ticks: [number, number][] = [
  [301, 2], [305, 1], [347, 1], [378, 1], [432, 1], [444, 1], [460, 3], [465, 1], [502, 1], [507, 1], [538, 1],
  [589, 1], [619, 3], [624, 1], [662, 1], [667, 1], [698, 1], [745, 1], [756, 1], [774, 1],
];
const sideTop = [
  <BookmarkIcon />, <PagesIcon />, <Badge><CommentsIcon /><GreenDot /></Badge>, <PaperclipIcon />, <FieldsIcon />, <SignaturesIcon />,
  <LayersIcon />, <ContentIcon />, <PinsIcon />, <TreeIcon />, <LinksIcon />,
];
const sideBottom = [<TagIcon />, <OrderIcon />, <AccessIcon />, <AccessListIcon />];

const Tool = ({ icon, text, w, menu, corner }: { icon: React.ReactNode; text: string; w: number; menu?: boolean; corner?: boolean }) => (
  <ToolRow>
    {icon}
    <Item $ml={3}><Label w={w}>{text}</Label></Item>
    {menu && <Item $ml={4}><Chevron /></Item>}
    {corner && <Corner />}
  </ToolRow>
);

export default function App() {
  return (
    <Window>
      <GlobalStyle />
      <Header>
        <HeaderLeft>
          <QuickBar>
            <Item $ml={6}><LogoIcon /></Item>
            <Divider $ml={8} />
            <Item $ml={4}><FolderOpen /></Item>
            <Item $ml={2}><Chevron /></Item>
            <Item $ml={3}><SaveIcon /></Item>
            <Item $ml={4}><PrintIcon /></Item>
            <Item $ml={3}><MailIcon /></Item>
            <Item $ml={4}><Chevron /></Item>
            <Item $ml={3}><ScanIcon /></Item>
            <Item $ml={3}><Chevron /></Item>
            <Divider $ml={2} />
            <Item $ml={2}><Undo /></Item>
            <Item $ml={4}><Chevron color="#999" /></Item>
            <Item $ml={3}><Undo flip /></Item>
            <Item $ml={3}><Chevron color="#999" /></Item>
            <Divider $ml={2} />
            <Item $ml={3}><RoundArrow dir="left" ring="#777" color="#6fae32" /></Item>
            <Item $ml={4}><RoundArrow dir="right" ring="#aaa" color="#a5cc82" /></Item>
          </QuickBar>
          <TabRow>
            <FileTab><Label w={18}>File</Label></FileTab>
            <HomeTab><Label w={33}>Home</Label></HomeTab>
            <Item $ml={9} />
            {tabs.map(([name, w, slot]) => <Tab key={name} $w={slot}><Label w={w}>{name}</Label></Tab>)}
          </TabRow>
        </HeaderLeft>
        <Contextual>
          <Label w={49} size={11}>Stamping</Label>
          <Label w={27} size={11}>Tools</Label>
          <Label w={38}>Format</Label>
        </Contextual>
        <AppTitle><Label w={257}>131241-WSB01-DR-P-6011 - PDF-XChange Editor</Label></AppTitle>
        <HeaderRight>
          <QuickBar>
            <QuickLaunch><SearchIcon /><Label w={115} color="#8a8a8a">Quick Launch (Ctrl+.)</Label></QuickLaunch>
            <Divider $ml={2} />
            <Item $ml={2}><ThemeIcon /></Item>
            <Item $ml={4}><Chevron /></Item>
            <Divider $ml={2} />
            <Item $ml={3}><FullscreenIcon /></Item>
            <Divider $ml={3} />
            <Item $ml={16}><svg width="12" height="12" viewBox="0 0 12 12"><path d="M0 9.500h12" stroke="#000" strokeWidth="1.200" /></svg></Item>
            <Item $ml={32}><svg width="12" height="12" viewBox="0 0 12 12" fill="none"><path d="M.500 3.500h8v8h-8zM3.500 3V.500h8v8H9" stroke="#000" /></svg></Item>
            <Item $ml={32}><Cross s={12} /></Item>
          </QuickBar>
          <Bar>
            <Item><FindToggle><FindDoc /><Label w={32}>Find...</Label></FindToggle></Item>
            <Item $ml={2}><FolderSearch /></Item>
            <Item $ml={3}><Label w={44}>Search...</Label></Item>
            <Item $ml={15}><Chevron dir="up" /></Item>
          </Bar>
        </HeaderRight>
      </Header>

      <Ribbon>
        <Group $w={268}>
          <GroupBody>
            <BigButton $w={52} $ml={1}><HandIcon /><Label w={29}>Hand</Label></BigButton>
            <BigButton $w={53}><SelectTextIcon /><Label w={31}>Select</Label><Label w={21}>Text</Label></BigButton>
            <BigButton $w={62}><SelectCommentsIcon /><Label w={31}>Select</Label><Label w={59}>Comments</Label></BigButton>
            <Column $ml={2}>
              <Tool icon={<SnapshotIcon />} text="Snapshot" w={49} menu />
              <Tool icon={<ClipboardIcon />} text="Clipboard" w={52} menu />
              <Tool icon={<FindDoc />} text="Find" w={23} menu />
            </Column>
          </GroupBody>
          <GroupName><Label w={27} color="#838383">Tools</Label></GroupName>
        </Group>
        <Group $w={177}>
          <GroupBody>
            <Column $ml={4}>
              <ToolRow><RoundSign /><Item $ml={3}><Combo $w={112}><Label w={34}>1000%</Label><Chevron /></Combo></Item><Item $ml={4}><RoundSign plus /></Item></ToolRow>
              <ToolRow>
                <Fit kind="one" /><Item $ml={4}><Fit kind="all" /></Item><Item $ml={4}><Fit kind="width" /></Item><Item $ml={4}><Fit kind="visible" /></Item>
                <Divider $h={27} $ml={3} /><Item $ml={2}><Rotate /></Item><Item $ml={5}><Rotate flip /></Item>
              </ToolRow>
              <ToolRow>
                <BookmarkIcon /><Item $ml={4}><PagesIcon /></Item><Item $ml={3}><Badge><CommentsIcon /><GreenDot /></Badge></Item><Item $ml={4}><PaperclipIcon /></Item><Item $ml={4}><ContentIcon /></Item>
                <Divider $h={27} $ml={3} /><Item $ml={4}><ChecklistGear /></Item>
              </ToolRow>
            </Column>
          </GroupBody>
          <GroupName><Label w={25} color="#838383">View</Label></GroupName>
        </Group>
        <Group $w={217}>
          <GroupBody>
            <BigButton $w={54}><EditTextIcon /><Label w={20}>Edit</Label><Label w={21}>Text</Label></BigButton>
            <BigButton $w={54}><EditObjectsIcon /><Label w={20}>Edit</Label><Item><Label w={40}>Objects</Label><Chevron /></Item></BigButton>
            <BigButton $w={54}><AddIcon /><Label w={22}>Add</Label><Chevron /></BigButton>
            <BigButton $w={50}><SelectionIcon /><Label w={47}>Selection</Label><Chevron /></BigButton>
          </GroupBody>
          <GroupName><Label w={38} color="#838383">Objects</Label></GroupName>
        </Group>
        <Group $w={269}>
          <GroupBody>
            <Column $ml={4}>
              <Tool icon={<TypewriterIcon />} text="Typewriter" w={54} corner />
              <Tool icon={<HighlightIcon />} text="Highlight Text" w={74} corner />
              <Tool icon={<UnderlineIcon />} text="Underline" w={51} corner />
            </Column>
            <Column $ml={2}>
              <Tool icon={<StickyIcon />} text="Sticky Note" w={60} corner />
              <Tool icon={<ArrowIcon />} text="Arrow" w={32} corner />
              <Tool icon={<RectIcon />} text="Rectangle" w={52} corner />
            </Column>
            <Divider $h={84} $ml={1} />
            <BigButton $w={52} $active $ml={1}><StampIcon /><Label w={34}>Stamp</Label><Chevron /></BigButton>
          </GroupBody>
          <GroupName><Label w={48} color="#838383">Comment</Label></GroupName>
        </Group>
        <Group $w={209}>
          <GroupBody>
            <BigButton $w={54} $ml={1}><AddLinkIcon /><Label w={47}>Add/Edit</Label><Label w={27}>Links</Label></BigButton>
            <Column $ml={1}>
              <Tool icon={<Globe />} text="Add Links to URLs" w={95} />
              <Tool icon={<Globe remove />} text="Remove All Web-Links" w={119} />
              <Tool icon={<BarcodeIcon />} text="Add Links to Barcodes" w={117} />
            </Column>
          </GroupBody>
          <GroupName><Label w={26} color="#838383">Links</Label></GroupName>
        </Group>
        <Group $w={66}>
          <GroupBody>
            <BigButton $w={65}><SignIcon /><Label w={23}>Sign</Label><Label w={56}>Document</Label></BigButton>
          </GroupBody>
          <GroupName><Label w={36} color="#838383">Protect</Label></GroupName>
        </Group>
      </Ribbon>

      <DocBar>
        <DocTab><DocTabTop><Label w={137}>131241-WSB01-DR-P-6011</Label><Cross s={6} w={2.2} /></DocTabTop></DocTab>
        <Item $ml={2}><BarButton $w={27}><svg width="15" height="15" viewBox="0 0 15 15"><path d="M0 7.500h15M7.500 0v15" stroke="#222" strokeWidth="1.200" /></svg></BarButton></Item>
        <Item $ml={1695}><BarButton $w={30}><Cross s={13} w={1.2} /></BarButton></Item>
      </DocBar>
      <Edge />

      <Workspace>
        <Sidebar>
          <PinBand><PinMark /></PinBand>
          <Grip $w={25} $h={10} />
          {sideTop.map((icon, i) => <SideIcon key={i}>{icon}</SideIcon>)}
          <SideRule />
          {sideBottom.map((icon, i) => <SideIcon key={i}>{icon}</SideIcon>)}
        </Sidebar>
        <Main>
          <ViewRow>
            <Page>
              <Drawing />
              <FindBar>
                <Item $ml={9}><Chevron /></Item>
                <FindInput>
                  <Label w={18}>MV</Label>
                  <Item $ml={105}><Label w={30} color="#777">26/26</Label></Item>
                  <Item $ml={4}><Cross s={10} color="#d32f2f" /></Item>
                  <Item $ml={8}><Chevron /></Item>
                </FindInput>
                <Item $ml={6}><Chevron dir="left" /></Item>
                <Item $ml={12}><Chevron dir="right" /></Item>
                <Item $ml={15}><svg width="4" height="12" viewBox="0 0 4 12"><path d="M.500.500h3v3h-3zM.500 4.500h3v3h-3zM.500 8.500h3v3h-3z" fill="#222" /></svg></Item>
                <Item $ml={16}><Cross s={9} w={2} /></Item>
              </FindBar>
            </Page>
            <VScroll>
              <Chevron dir="up" color="#666" />
              {ticks.map(([y, h]) => <Tick key={y} $y={y - 197} $h={h} />)}
              <VThumb />
              <Chevron color="#666" />
            </VScroll>
          </ViewRow>
          <HScroll>
            <Item $ml={2}><Chevron dir="left" color="#555" /></Item>
            <HThumb />
            <Item $ml={1202}><Chevron dir="right" color="#555" /></Item>
          </HScroll>
          <StatusBar>
            <GripMark ml={2} />
            <Item $ml={3}><GearsIcon /></Item>
            <Item $ml={3}><Label w={51}>Options...</Label></Item>
            <Item $ml={5}><Chevron /></Item>
            <Divider $ml={2} />
            <Item $ml={2}><SizeIcon /></Item>
            <Item $ml={1}><div><Label w={74}>W: 841.00mm</Label><Label w={74}>H: 594.00mm</Label></div></Item>
            <Divider $h={23} $ml={3} />
            <Item $ml={4}><CursorIcon /></Item>
            <Item $ml={2}><div><Label w={13}>X :</Label><Label w={13}>Y :</Label></div></Item>
            <GripMark ml={558} />
            <Item $ml={3}><RoundNav d="M8.500 7v10M16.500 7l-5 5 5 5" /></Item>
            <Item $ml={4}><RoundNav d="M14 7l-5 5 5 5" /></Item>
            <PageInput>1<i>/</i><sup>1</sup></PageInput>
            <Item $ml={3}><RoundNav d="M10 7l5 5-5 5" /></Item>
            <Item $ml={4}><RoundNav d="M7.500 7l5 5-5 5M15.500 7v10" /></Item>
            <Divider $ml={3} />
            <Item $ml={3}><RoundArrow dir="left" ring="#777" color="#6fae32" /></Item>
            <Item $ml={4}><RoundArrow dir="right" ring="#bbb" color="#b0d590" /></Item>
            <GripMark ml={365} />
            <Item $ml={3}><PageLayout kind="single" /></Item>
            <Item $ml={2}><ActiveLayout><PageLayout kind="scroll" /></ActiveLayout></Item>
            <Item $ml={2}><PageLayout kind="facing" /></Item>
            <Item $ml={4}><PageLayout kind="grid" /></Item>
            <GripMark ml={5} />
            <Item $ml={2}><Combo $w={82}><Label w={34}>1000%</Label><Chevron /></Combo></Item>
            <Divider $ml={2} />
            <Item $ml={3}><RoundSign /></Item>
            <Slider><Track $w={49} /><Notch /><Track $w={12} /><Knob /><Track $w={19} $rest /></Slider>
            <Item $ml={4}><RoundSign plus /></Item>
            <GripMark ml={5} />
            <Item $ml={3}><PdfIcon /></Item>
            <Item $ml={3}><Chevron /></Item>
            <Overflow><svg width="10" height="10" viewBox="0 0 10 10" fill="none"><path d="M2 1l3 3 3-3M1.500 7.500h7" stroke="#333" strokeWidth="1.500" /></svg></Overflow>
          </StatusBar>
        </Main>
      </Workspace>
    </Window>
  );
}
